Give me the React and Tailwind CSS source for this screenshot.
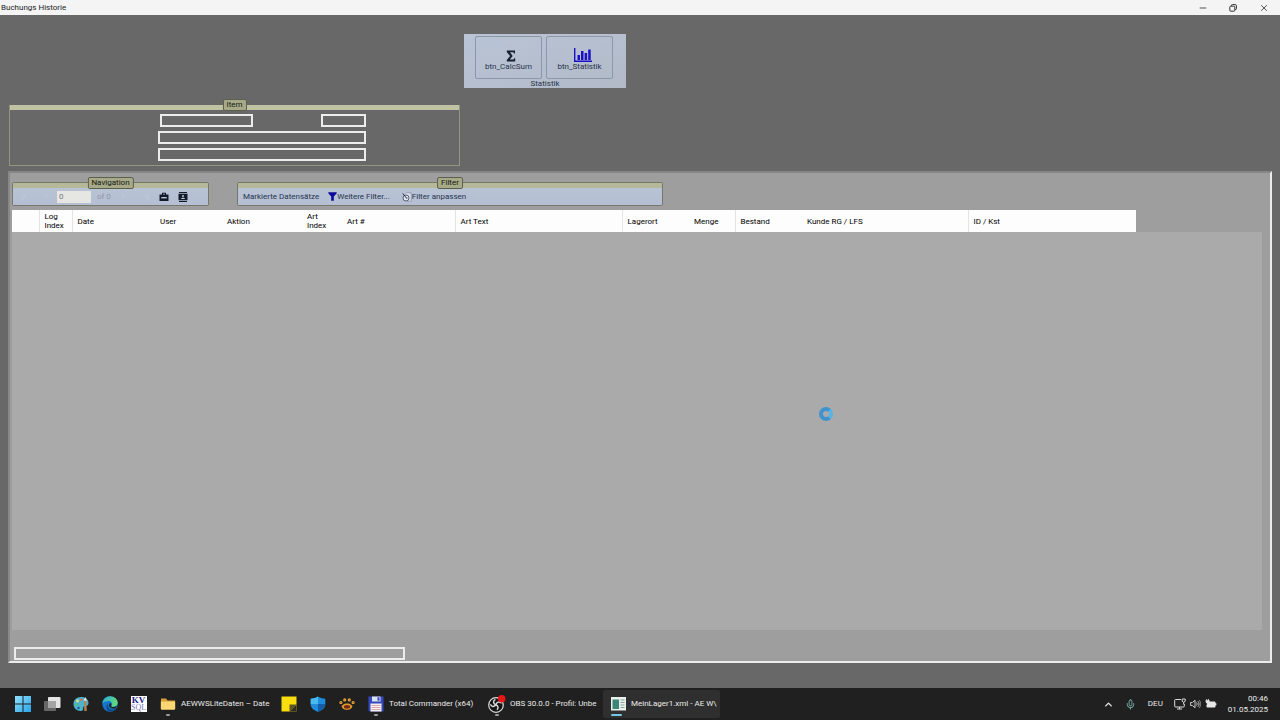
import { ChevronUp, Mic, Minus, X } from 'lucide-react';

const columns = [
  { label: '', width: 'w-[27px]' },
  { label: 'Log Index', width: 'w-[33px]', line: true },
  { label: 'Date', width: 'w-[83px]', line: true },
  { label: 'User', width: 'w-[67px]' },
  { label: 'Aktion', width: 'w-[80px]' },
  { label: 'Art Index', width: 'w-[40px]' },
  { label: 'Art #', width: 'w-[113px]' },
  { label: 'Art Text', width: 'w-[167px]', line: true },
  { label: 'Lagerort', width: 'w-[67px]', line: true },
  { label: 'Menge', width: 'w-[46px]' },
  { label: 'Bestand', width: 'w-[67px]', line: true },
  { label: 'Kunde RG / LFS', width: 'w-[166px]' },
  { label: 'ID / Kst', width: 'w-[168px]', line: true },
];

function RestoreIcon() {
  return (
    <svg viewBox="0 0 8 8" className="size-2" fill="none" stroke="#333" strokeWidth="1">
      <rect x="0.8" y="2.2" width="5" height="5" rx="1" />
      <path d="M2.4 2V1.6a1 1 0 0 1 1-1h2.8a1.2 1.2 0 0 1 1.2 1.2v2.8a1 1 0 0 1-1 1H6" />
    </svg>
  );
}

function SigmaIcon() {
  return (
    <svg viewBox="0 0 10 12" className="h-3 w-[10px]" fill="#18202e">
      <path d="M0.8 0.5h8.2v3H8L7.4 2.3H4L6.7 6 3.8 9.5h3.8l.6-1.3h1v3.3H.8V10L4.1 6 .8 2z" />
    </svg>
  );
}

function ChartIcon() {
  return (
    <svg viewBox="0 0 18 15" className="h-[15px] w-[18px]" fill="#1b10c8">
      <path d="M0 0h1.4v12.6H18V14H0z" />
      <path d="M3.5 7H6v5H3.5zM7 3h2.5v9H7zM10.6 5h2.5v7h-2.5zM14.2 1.4h2.5V12h-2.5z" />
    </svg>
  );
}

function FunnelIcon() {
  return (
    <svg viewBox="0 0 9 9" className="size-[9px]" fill="#0b0a9c">
      <path d="M0.3 0.3h8.4v1L5.8 4.6v4.1H3.2V4.6L.3 1.3z" />
    </svg>
  );
}

function AdjustIcon() {
  return (
    <svg viewBox="0 0 10 10" className="size-[10px]" fill="none">
      <path d="M4 .8h5.2v8.4H5" fill="#d9deea" stroke="#7a8292" strokeWidth=".6" />
      <circle cx="4" cy="6" r="3" fill="#dfe5ef" stroke="#4a5568" strokeWidth=".9" />
      <path d="M.8 1.4 4.2 5.8M4 6h1.4" stroke="#28364d" strokeWidth="1" />
    </svg>
  );
}

function CaseIcon() {
  return (
    <svg viewBox="0 0 10 10" className="size-[10px]" fill="#111a29">
      <path d="M3 0.8h4v1.6h2.5V9H.5V2.4H3zM4 1.7v.8h2v-.8z" fillRule="evenodd" />
      <path d="M2.3 5h5.4v1.4H2.3z" fill="#bfc8da" />
    </svg>
  );
}

function CardIcon() {
  return (
    <svg viewBox="0 0 10 10" className="size-[10px]" fill="#111a29">
      <path d="M1 0h8v1H1zM.5 1.8h9v6.4h-9zM1 9h8v1H1z" />
      <circle cx="5" cy="3.9" r="1" fill="#bfc8da" />
      <path d="M3 7c0-1.7 4-1.7 4 0z" fill="#bfc8da" />
    </svg>
  );
}

function WindowsIcon() {
  return (
    <svg viewBox="0 0 16 16" className="size-4">
      <defs>
        <linearGradient id="win" x1="0" y1="0" x2="1" y2="1">
          <stop offset="0" stopColor="#8fe0fb" />
          <stop offset="1" stopColor="#2aa5e8" />
        </linearGradient>
      </defs>
      <path d="M0 0h7.5v7.5H0zM8.5 0H16v7.5H8.5zM0 8.5h7.5V16H0zM8.5 8.5H16V16H8.5z" fill="url(#win)" />
    </svg>
  );
}

function TaskViewIcon() {
  return (
    <svg viewBox="0 0 18 16" className="h-4 w-[18px]">
      <rect x="1" y="5" width="12" height="10" rx="1" fill="#676767" />
      <rect x="5" y="1" width="12.5" height="11" rx="1" fill="#e4e4e4" />
      <path d="M5 5h8v7H6a1 1 0 0 1-1-1z" fill="#a4a4a4" />
    </svg>
  );
}

function PaletteIcon() {
  return (
    <svg viewBox="0 0 16 16" className="size-4">
      <path d="M8 1c4.5 0 7.5 2.6 7.5 6 0 2-1.2 3-3 3-1.5 0-2.5.5-2.3 2 .2 1.7-.6 3-2.4 3C3.5 15 .5 12 .5 8S3.5 1 8 1z" fill="#4cb3cf" />
      <circle cx="4.5" cy="5" r="1.4" fill="#e8e071" />
      <circle cx="8.5" cy="3.7" r="1.3" fill="#e06a4b" />
      <circle cx="3.5" cy="8.7" r="1.3" fill="#59c36a" />
      <circle cx="5.5" cy="12" r="1.2" fill="#244e9b" />
      <path d="M11 5h2.4l.3 10h-2.4z" fill="#b9824e" />
      <path d="M10.7 4.5c0-2 1.3-2.5 1.6-3.5.5 1 1.6 2 1.2 4z" fill="#d6e0e4" />
    </svg>
  );
}

function EdgeIcon() {
  return (
    <svg viewBox="0 0 16 16" className="size-4">
      <defs>
        <linearGradient id="edge" x1="0" y1="0" x2="1" y2=".3">
          <stop offset="0" stopColor="#2aa9df" />
          <stop offset="1" stopColor="#61d97b" />
        </linearGradient>
      </defs>
      <circle cx="8" cy="8" r="7.7" fill="#1676cc" />
      <path d="M.3 7.5C.8 3.2 4 .3 8 .3c4.6 0 7.7 3.2 7.7 6.5 0 2.4-1.9 3.9-4 3.9-1.7 0-2.6-.6-2.3-1.3 1.3-2 .1-4.5-2.7-4.5C3.8 4.9 1.3 6 .3 7.5z" fill="url(#edge)" />
      <path d="M6.3 7.5c-1.5 3.6 1.7 7 5.7 5.6l2-1.3c-1.4 2.5-3.5 3.8-6.5 3.8C4 14.5 3 10 6.3 7.5z" fill="#114a8b" />
      <path d="M8.3 7c1.2.5 1.3 1.7.8 2.7-.4 1 1 1.7 3 1.3l2.6-.9-1 1.8c-3 1.4-6.6.2-6.6-2.3 0-1.2.4-2 1.2-2.6z" fill="#202020" />
    </svg>
  );
}

function KvSqlIcon() {
  return (
    <span className="flex size-4 flex-col items-center justify-center bg-white font-['Liberation_Serif',serif] text-[9px] leading-[8px] text-[#1d1b8c]">
      <b>KV</b>
      <span className="text-[8px] leading-[8px] text-[#7777b5]">SQL</span>
    </span>
  );
}

function FolderIcon() {
  return (
    <svg viewBox="0 0 16 14" className="h-[14px] w-4">
      <path d="M1 1.5h5l1.5 2H15V12H1z" fill="#d99f34" />
      <path d="M.8 4.5h14.4v7.2a1 1 0 0 1-1 1H1.8a1 1 0 0 1-1-1z" fill="#fbd774" />
    </svg>
  );
}

function NoteIcon() {
  return (
    <svg viewBox="0 0 16 16" className="size-4">
      <path d="M.5.5h15v15H.5z" fill="#f9dd0d" />
      <path d="M8.5 15.5v-7h7z" fill="#5f5624" />
      <path d="M15.5 8.5v7h-7z" fill="#2c2c2a" />
    </svg>
  );
}

function ShieldIcon() {
  return (
    <svg viewBox="0 0 16 16" className="size-4">
      <path d="M8 .5c2 1.5 4.5 2 7.3 2.2V8c0 4-3.3 6.5-7.3 7.7C4 14.5.7 12 .7 8V2.7C3.5 2.5 6 2 8 .5z" fill="#1f8ddb" />
      <path d="M8 .5v7.6H.7V2.7C3.5 2.5 6 2 8 .5z" fill="#49b9ee" />
      <path d="M8 8.1h7.3C15.2 12 12 14.5 8 15.7z" fill="#145ea8" />
    </svg>
  );
}

function PawIcon() {
  return (
    <svg viewBox="0 0 16 12" className="h-3 w-4">
      <path d="M2.6 7.5c1 .8 1-2 5.4-2s4.400 2.800 5.400 2c0 2.700-2.400 4.300-5.400 4.300S2.600 10.200 2.600 7.500z" fill="#e59a2c" />
      <ellipse cx="8" cy="8.8" rx="3.2" ry="1.9" fill="#732a14" />
      <g fill="none" stroke="#eda637" strokeWidth="1.2">
        <circle cx="1.9" cy="4.5" r="1" />
        <circle cx="5.7" cy="1.9" r="1" />
        <circle cx="10.3" cy="1.9" r="1" />
        <circle cx="14.1" cy="4.5" r="1" />
      </g>
    </svg>
  );
}

function FloppyIcon() {
  return (
    <svg viewBox="0 0 16 16" className="size-4">
      <path d="M.5.5h15v15h-14l-1-1z" fill="#3449bd" />
      <path d="M4 .5h8.5v5H4z" fill="#dbe1ec" />
      <path d="M9.5 1.2h2v3.5h-2z" fill="#3449bd" />
      <path d="M2.5 7.5h11v8h-11z" fill="#f4efef" />
      <path d="M3.5 9.5h9M3.5 11.5h9M3.5 13.5h9" stroke="#da8f93" strokeWidth=".7" />
    </svg>
  );
}

function ObsIcon() {
  return (
    <svg viewBox="0 0 18 18" className="size-[18px]">
      <circle cx="8" cy="10" r="7.3" fill="#151515" stroke="#dedede" strokeWidth="1.2" />
      <path d="M7.4 4.3c-2.6 1.5-2.5 4.3.5 5.5 2.6 1 2.6 3.5 1 4.9M8 9.8c.6-3 3.3-3.7 5.6-1.5M7.9 9.8c-2 2.5-4.7 2-5.5-.5" fill="none" stroke="#d6d6d6" strokeWidth="1.5" />
      <circle cx="13.7" cy="3.8" r="3.7" fill="#ec1515" />
    </svg>
  );
}

function AppIcon() {
  return (
    <svg viewBox="0 0 15 14" className="h-[14px] w-[15px]">
      <path d="M0 0h15v13.5H0z" fill="#e9f0ed" />
      <path d="M1.5 2.5H8V12H1.5z" fill="#3c8578" />
      <path d="M9.5 3h4M9.5 5.5h4M9.5 8h4M9.5 10.5h4" stroke="#8da39e" strokeWidth="1" />
    </svg>
  );
}

function NetworkIcon() {
  return (
    <svg viewBox="0 0 12 12" className="size-3" fill="none" stroke="#dcdcdc" strokeWidth="1">
      <path d="M7 1.5H1.5a.8.8 0 0 0-.8.8v5.9c0 .5.3.8.8.8h8c.5 0 .8-.3.8-.8V6M3 11h5M5.5 9v2" />
      <path d="M8.2 1h3v2.3l-1.5 1-1.5-1zM9.7 4v2.5" />
    </svg>
  );
}

function SoundIcon() {
  return (
    <svg viewBox="0 0 11 10" className="h-[10px] w-[11px]" fill="none" stroke="#dcdcdc" strokeWidth=".9">
      <path d="M.6 3.5h1.8L5 1.2v7.6L2.4 6.5H.6zM6.5 3.5c.8 1 .8 2 0 3M7.9 2.2c1.5 1.8 1.5 3.8 0 5.6" />
      <path d="M9.2 1c2 2.5 2 5.5 0 8" stroke="#888" />
    </svg>
  );
}

function BatteryIcon() {
  return (
    <svg viewBox="0 0 12 10" className="h-[10px] w-3" fill="#e8e8e8">
      <path d="M3.5 2.5h6a1 1 0 0 1 1 1v.8h.9v2h-.9v1.2a1 1 0 0 1-1 1h-7a1 1 0 0 1-1-1V6z" />
      <path d="M.5 1.2h.9V0h.8v1.2h1V0H4v1.2h.7c0 2-.6 3-1.8 3.2V6h-.7V4.4C1 4.2.5 3.2.5 1.2z" />
    </svg>
  );
}

function Caption({ children }) {
  return (
    <h2 className="absolute -top-[6px] left-1/2 -translate-x-1/2 rounded-xs border border-[#5d5f4d] bg-[#a7aa88] px-[3px] text-[8px] leading-[10px] text-[#16180f]">
      {children}
    </h2>
  );
}

function ToolGroup({ title, className, children }) {
  return (
    <section className={`relative flex h-6 flex-col rounded-xs border border-[#74776a] ${className}`}>
      <Caption>{title}</Caption>
      <div className="h-[5px] bg-[#b6b999]" />
      <div className="flex flex-1 items-center bg-linear-to-b from-[#b8c3d4] to-[#b5bed3] text-[#26344e]">{children}</div>
    </section>
  );
}

function BoxInput({ label, className }) {
  return <input type="text" aria-label={label} className={`h-[13px] border-2 border-[#ececec] bg-transparent px-1 text-[8px] text-white outline-none ${className}`} />;
}

function TaskButton({ label, icon, text, active }) {
  return (
    <button
      type="button"
      aria-label={label}
      className={`relative flex h-7 shrink-0 items-center rounded-xs ${text ? 'gap-1 pl-[6px]' : 'w-[29px] justify-center'} ${text ? (active ? 'w-[117px] bg-[#2f2f2f]' : 'w-[121px]') : ''}`}
    >
      <span className={text ? 'flex w-[18px] shrink-0 justify-center' : ''}>{icon}</span>
      {text && <span className="whitespace-nowrap">{text}</span>}
      {text && (
        <span className={`absolute bottom-[2px] h-[2px] rounded-full ${active ? 'left-[8px] w-[11px] bg-[#74c6e6]' : 'left-[13px] w-1 bg-[#9a9a9a]'}`} />
      )}
    </button>
  );
}

export default function App() {
  return (
    <div className="relative flex min-h-screen flex-col bg-[#686868] font-[Roboto,sans-serif] text-[8px]">
      <header className="flex h-[15px] items-center justify-between bg-[#f4f4f4] text-[#1c1c1c]">
        <h1 className="pl-px">Buchungs Historie</h1>
        <div className="flex h-full text-[#333]">
          <button type="button" aria-label="Minimieren" className="flex w-[30px] items-center justify-center">
            <Minus className="size-[10px]" />
          </button>
          <button type="button" aria-label="Wiederherstellen" className="flex w-[30px] items-center justify-center">
            <RestoreIcon />
          </button>
          <button type="button" aria-label="Schließen" className="flex w-[32px] items-center justify-center">
            <X className="size-[10px]" />
          </button>
        </div>
      </header>

      <main className="flex flex-1 flex-col px-2 pt-[19px] pb-[25px]">
        <section className="ml-[456px] w-[162px] bg-linear-to-br from-[#b9c4d6] to-[#b2bac8] pt-[2px] text-[#27334a]">
          <div className="flex justify-center gap-1 pr-[2px]">
            <button type="button" className="flex h-[43px] w-[67px] flex-col items-center justify-end rounded-xs border border-[#8c97a9] pb-[7px] leading-[8px]">
              <span className="pb-px pl-1"><SigmaIcon /></span>
              btn_CalcSum
            </button>
            <button type="button" className="flex h-[43px] w-[67px] flex-col items-center justify-end rounded-xs border border-[#8c97a9] pb-[7px] leading-[8px]">
              <span className="pl-[6px]"><ChartIcon /></span>
              btn_Statistik
            </button>
          </div>
          <h2 className="h-[9px] text-center leading-[9px]">Statistik</h2>
        </section>

        <section className="relative mt-[17px] ml-px h-[61px] w-[451px] border border-t-0 border-[#92957f]">
          <Caption>Item</Caption>
          <div className="h-[5px] bg-[#bfc3a1]" />
          <div className="ml-[148px] flex w-[208px] flex-col gap-1 pt-1">
            <div className="flex justify-between pl-[2px]">
              <BoxInput label="Artikelnummer" className="w-[93px]" />
              <BoxInput label="Index" className="w-[45px]" />
            </div>
            <BoxInput label="Artikeltext" className="w-full" />
            <BoxInput label="Zusatztext" className="w-full" />
          </div>
        </section>

        <section className="mt-[5px] flex flex-1 flex-col border-2 border-t-[#858585] border-r-[#ececec] border-b-[#ececec] border-l-[#888888] bg-[#9e9e9e] pr-2 pb-px pl-[2px]">
          <div className="flex gap-[28px] pt-[9px]">
            <ToolGroup title="Navigation" className="w-[197px]">
              <div className="flex w-[44px] justify-around text-[#c7cfde]">
                <button type="button" aria-label="Erster" className="w-3">|‹</button>
                <button type="button" aria-label="Zurück" className="w-3">‹</button>
              </div>
              <input type="text" aria-label="Position" defaultValue="0" className="h-3 w-[34px] bg-[#e6e6e2] px-[2px] text-[#777] outline-none" />
              <span className="pl-[6px] text-[#8d96ab]">of 0</span>
              <div className="flex w-12 justify-around text-[#c7cfde]">
                <button type="button" aria-label="Weiter" className="w-3">›</button>
                <button type="button" aria-label="Letzter" className="w-3">›|</button>
              </div>
              <button type="button" aria-label="Koffer"><CaseIcon /></button>
              <button type="button" aria-label="Karte" className="pl-[9px]"><CardIcon /></button>
            </ToolGroup>
            <ToolGroup title="Filter" className="w-[426px]">
              <button type="button" className="pl-[5px]">Markierte Datensätze</button>
              <button type="button" className="flex items-center pl-[9px]"><FunnelIcon />Weitere Filter...</button>
              <button type="button" className="flex items-center pl-3"><AdjustIcon />Filter anpassen</button>
            </ToolGroup>
          </div>

          <div className="mt-1 flex flex-1 flex-col">
            <table className="w-[1124px] table-fixed border-collapse bg-[#fdfdfd] leading-[9px] text-black">
              <thead>
                <tr className="h-[22px]">
                  {columns.map((column, index) => (
                    <th
                      key={index}
                      className={`py-0 pr-2 pl-[5px] text-left font-normal ${column.width} ${column.line ? 'border-l border-[#e4e4e4]' : ''}`}
                    >
                      {column.label}
                    </th>
                  ))}
                </tr>
              </thead>
            </table>
            <div className="flex-1 bg-[#aaaaaa]" />
          </div>
          <BoxInput label="Status" className="mt-[17px] ml-[2px] w-[391px]" />
        </section>
      </main>

      <footer className="flex h-8 items-center justify-between bg-[#202020] text-[#ececec]">
        <nav className="flex items-center pl-2">
          <TaskButton label="Start" icon={<WindowsIcon />} />
          <TaskButton label="Taskansicht" icon={<TaskViewIcon />} />
          <TaskButton label="Paint" icon={<PaletteIcon />} />
          <TaskButton label="Edge" icon={<EdgeIcon />} />
          <TaskButton label="KV SQL" icon={<KvSqlIcon />} />
          <TaskButton label="Explorer" icon={<FolderIcon />} text="AEWWSLiteDaten – Date" />
          <TaskButton label="Notizen" icon={<NoteIcon />} />
          <TaskButton label="Sicherheit" icon={<ShieldIcon />} />
          <TaskButton label="Paw" icon={<PawIcon />} />
          <TaskButton label="Total Commander" icon={<FloppyIcon />} text="Total Commander (x64)" />
          <TaskButton label="OBS" icon={<ObsIcon />} text="OBS 30.0.0 - Profil: Unbe" />
          <TaskButton label="MeinLager" icon={<AppIcon />} text="MeinLager1.xml - AE W\" active />
        </nav>
        <div className="flex items-center pr-3">
          <button type="button" aria-label="Ausgeblendete Symbole"><ChevronUp className="size-[11px]" strokeWidth={3} /></button>
          <button type="button" aria-label="Mikrofon" className="pl-[11px] text-[#7fb8ac]"><Mic className="size-[11px]" /></button>
          <button type="button" className="pl-3">DEU</button>
          <button type="button" aria-label="Netzwerk und Ton" className="flex items-center gap-1 pl-[11px]">
            <NetworkIcon />
            <SoundIcon />
            <BatteryIcon />
          </button>
          <time className="pl-[11px] text-right leading-[11px]">
            00:46
            <br />
            01.05.2025
          </time>
        </div>
      </footer>

      {/* busy cursor */}
      <div className="absolute top-[407px] left-[819px] size-[14px] rounded-full border-4 border-[#3f94cf] border-r-[#55b5e6]" />
    </div>
  );
}
